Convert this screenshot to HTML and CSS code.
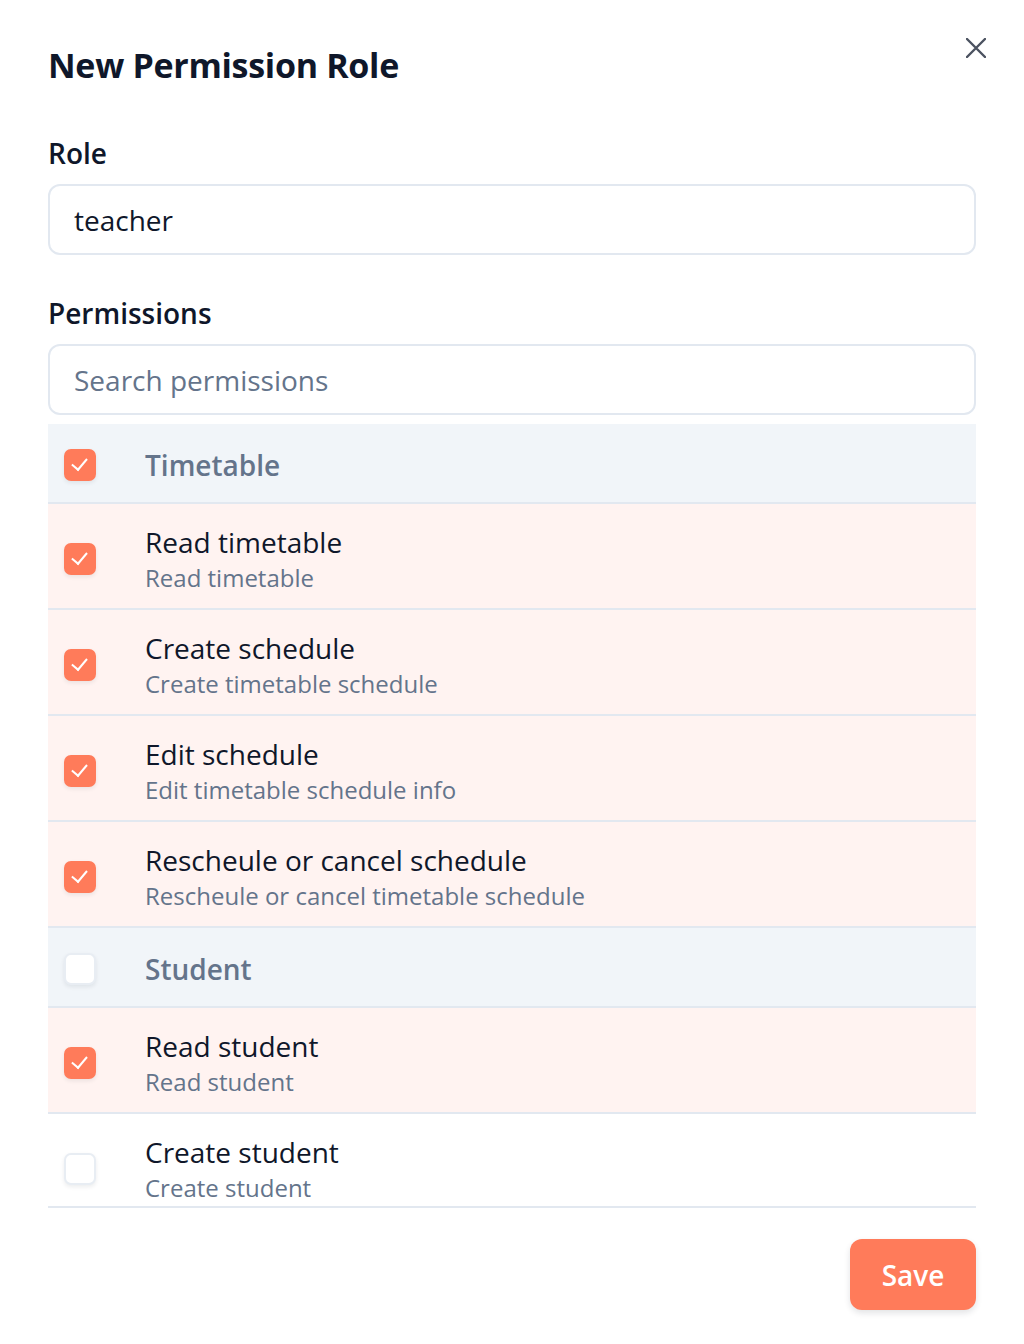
FILE: index.html
```html
<!DOCTYPE html>
<html lang="en">
<head>
    <meta charset="UTF-8">
    <meta name="viewport" content="width=device-width, initial-scale=1.0">
    <title>New Permission Role</title>
    <link rel="stylesheet" href="styles.css">
</head>
<body>
    <div class="modal">
        <div class="modal-header">
            <h2>New Permission Role</h2>
            <button class="close" aria-label="Close">
                <svg width="20" height="20" viewBox="0 0 20 20"><path d="M1 1L19 19M19 1L1 19" stroke="#4b5260" stroke-width="2.4" stroke-linecap="round"/></svg>
            </button>
        </div>

        <label class="field-label" for="role">Role</label>
        <input type="text" id="role" class="field" value="teacher">

        <label class="field-label perms" for="search">Permissions</label>
        <input type="text" id="search" class="field" placeholder="Search permissions">

        <div class="list">
            <div class="row group">
                <span class="check on"></span>
                <span class="group-name">Timetable</span>
            </div>
            <div class="row item selected">
                <span class="check on"></span>
                <div class="text">
                    <div class="name">Read timetable</div>
                    <div class="desc">Read timetable</div>
                </div>
            </div>
            <div class="row item selected">
                <span class="check on"></span>
                <div class="text">
                    <div class="name">Create schedule</div>
                    <div class="desc">Create timetable schedule</div>
                </div>
            </div>
            <div class="row item selected">
                <span class="check on"></span>
                <div class="text">
                    <div class="name">Edit schedule</div>
                    <div class="desc">Edit timetable schedule info</div>
                </div>
            </div>
            <div class="row item selected">
                <span class="check on"></span>
                <div class="text">
                    <div class="name">Rescheule or cancel schedule</div>
                    <div class="desc">Rescheule or cancel timetable schedule</div>
                </div>
            </div>
            <div class="row group">
                <span class="check"></span>
                <span class="group-name">Student</span>
            </div>
            <div class="row item selected">
                <span class="check on"></span>
                <div class="text">
                    <div class="name">Read student</div>
                    <div class="desc">Read student</div>
                </div>
            </div>
            <div class="row item">
                <span class="check"></span>
                <div class="text">
                    <div class="name">Create student</div>
                    <div class="desc">Create student</div>
                </div>
            </div>
        </div>

        <div class="footer">
            <button class="save">Save</button>
        </div>
    </div>
</body>
</html>
```

FILE: styles.css
```css
body {
    margin: 0;
    font-family: "Open Sans", "Noto Sans", sans-serif;
    background: #fff;
    color: #0f172a;
}
.modal {
    padding: 41px 48px 33px;
}
.modal-header {
    display: flex;
    justify-content: space-between;
    align-items: flex-start;
}
.modal-header h2 {
    margin: 0;
    font-size: 34px;
    line-height: 48px;
    font-weight: 700;
    letter-spacing: -0.3px;
}
.close {
    border: none;
    background: none;
    padding: 0;
    margin: -3px -10px 0 0;
    width: 20px;
    height: 20px;
    cursor: pointer;
}
.close svg {
    display: block;
}
.field-label {
    display: block;
    margin-top: 46px;
    margin-bottom: 13px;
    font-size: 28px;
    line-height: 36px;
    font-weight: 600;
}
.field-label.perms {
    margin-top: 40px;
}
.field {
    display: block;
    box-sizing: border-box;
    width: 100%;
    height: 71px;
    padding: 0 24px;
    border: 2px solid #e2e8f0;
    border-radius: 12px;
    font-family: inherit;
    font-size: 28px;
    color: #0f172a;
    outline: none;
}
.field::placeholder {
    color: #64748b;
}
.list {
    margin-top: 9px;
    height: 782px;
    overflow: hidden;
    border-bottom: 2px solid #e2e8f0;
}
.row {
    display: flex;
    align-items: center;
    padding: 0 16px;
    border-bottom: 2px solid #e2e8f0;
}
.group {
    background: #f1f5f9;
    padding-top: 23px;
    padding-bottom: 19px;
}
.group-name {
    font-size: 28px;
    line-height: 36px;
    font-weight: 600;
    color: #64748b;
}
.item {
    padding-top: 20px;
    padding-bottom: 14px;
}
.item.selected {
    background: #fff3f1;
}
.check {
    flex: none;
    box-sizing: border-box;
    width: 32px;
    height: 32px;
    margin-right: 49px;
    border-radius: 7px;
    background: #fff;
    border: 2px solid #e8edf3;
    box-shadow: 0 2px 4px rgba(15, 23, 42, 0.08);
    position: relative;
}
.check.on {
    background: #ff7b5a;
    border-color: #ff7b5a;
}
.check.on::after {
    content: "";
    position: absolute;
    left: 9px;
    top: 4px;
    width: 7px;
    height: 13px;
    border-right: 2.5px solid #fff;
    border-bottom: 2.5px solid #fff;
    transform: rotate(40deg);
}
.name {
    font-size: 28px;
    line-height: 36px;
    color: #0f172a;
}
.desc {
    margin-top: 2px;
    font-size: 24px;
    line-height: 32px;
    color: #64748b;
}
.footer {
    display: flex;
    justify-content: flex-end;
    margin-top: 31px;
}
.save {
    width: 126px;
    height: 71px;
    border: none;
    border-radius: 12px;
    background: #ff7b5a;
    color: #fff;
    font-family: inherit;
    font-size: 28px;
    font-weight: 600;
    box-shadow: 0 3px 6px rgba(15, 23, 42, 0.12);
    cursor: pointer;
}
```
